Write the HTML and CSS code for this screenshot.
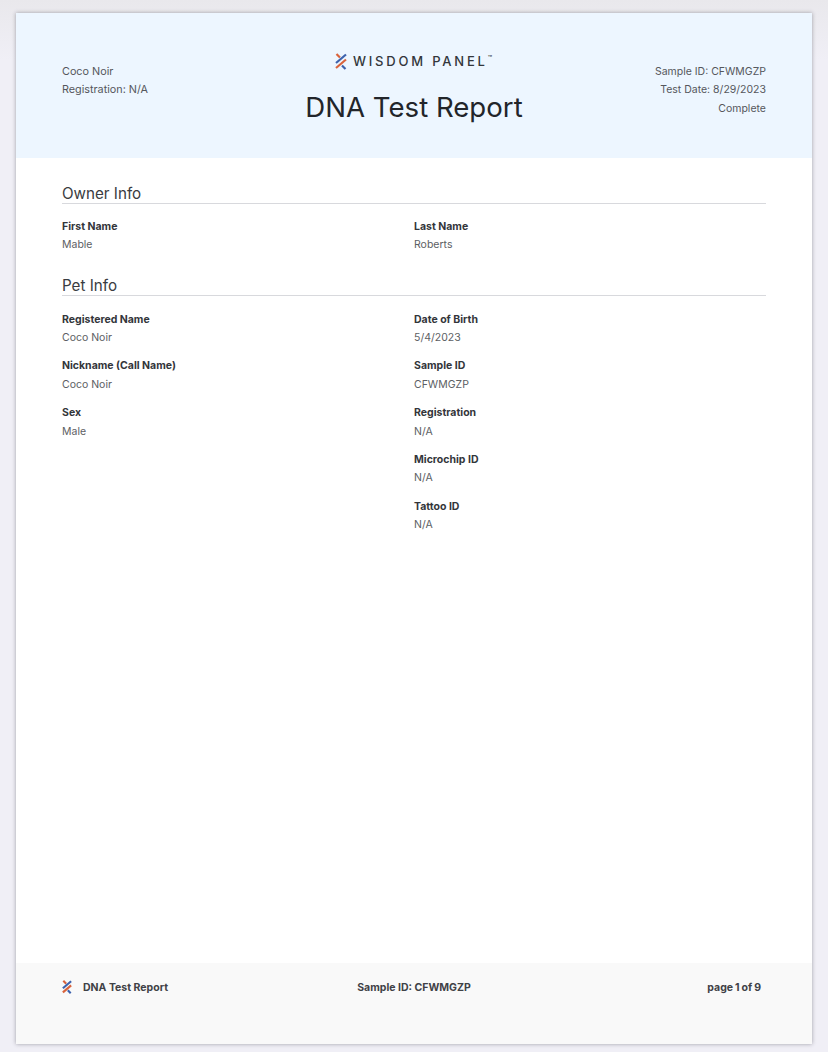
FILE: index.html
```html
<!DOCTYPE html>
<html lang="en">
<head>
<meta charset="utf-8">
<title>DNA Test Report</title>
<link rel="stylesheet" href="styles.css">
</head>
<body>
<main class="sheet">
  <header class="hero">
    <div class="hero-left">
      <div>Coco Noir</div>
      <div>Registration: N/A</div>
    </div>
    <div class="hero-center">
      <div class="brand">
        <svg class="mark" viewBox="0 0 12 17" width="12" height="17" aria-hidden="true">
          <path d="M1.5 1 L5 4.5" stroke="#d9633c" stroke-width="2.2" fill="none"/>
          <path d="M1 15 L11 6.5" stroke="#d9633c" stroke-width="2.2" fill="none"/>
          <path d="M1 10 L11 1.5" stroke="#3d62ad" stroke-width="2.2" fill="none"/>
          <path d="M7 12.5 L10.5 16" stroke="#3d62ad" stroke-width="2.2" fill="none"/>
        </svg>
        <span class="brand-name">WISDOM PANEL<sup class="tm">™</sup></span>
      </div>
      <h1 class="title">DNA Test Report</h1>
    </div>
    <div class="hero-right">
      <div>Sample ID: CFWMGZP</div>
      <div>Test Date: 8/29/2023</div>
      <div>Complete</div>
    </div>
  </header>

  <div class="content">
    <section class="section owner">
      <h2 class="section-title">Owner Info</h2>
      <div class="cols">
        <div class="col">
          <div class="field"><div class="label">First Name</div><div class="value">Mable</div></div>
        </div>
        <div class="col">
          <div class="field"><div class="label">Last Name</div><div class="value">Roberts</div></div>
        </div>
      </div>
    </section>

    <section class="section pet">
      <h2 class="section-title">Pet Info</h2>
      <div class="cols">
        <div class="col">
          <div class="field"><div class="label">Registered Name</div><div class="value">Coco Noir</div></div>
          <div class="field"><div class="label">Nickname (Call Name)</div><div class="value">Coco Noir</div></div>
          <div class="field"><div class="label">Sex</div><div class="value">Male</div></div>
        </div>
        <div class="col">
          <div class="field"><div class="label">Date of Birth</div><div class="value">5/4/2023</div></div>
          <div class="field"><div class="label">Sample ID</div><div class="value">CFWMGZP</div></div>
          <div class="field"><div class="label">Registration</div><div class="value">N/A</div></div>
          <div class="field"><div class="label">Microchip ID</div><div class="value">N/A</div></div>
          <div class="field"><div class="label">Tattoo ID</div><div class="value">N/A</div></div>
        </div>
      </div>
    </section>
  </div>

  <footer class="foot">
    <div class="foot-left">
      <svg class="foot-mark" viewBox="0 0 12 17" width="10" height="14" aria-hidden="true">
        <path d="M1.5 1 L5 4.5" stroke="#d9633c" stroke-width="2.6" fill="none"/>
        <path d="M1 15 L11 6.5" stroke="#d9633c" stroke-width="2.6" fill="none"/>
        <path d="M1 10 L11 1.5" stroke="#3d62ad" stroke-width="2.6" fill="none"/>
        <path d="M7 12.5 L10.5 16" stroke="#3d62ad" stroke-width="2.6" fill="none"/>
      </svg>
      <span>DNA Test Report</span>
    </div>
    <div class="foot-center">Sample ID: CFWMGZP</div>
    <div class="foot-right">page 1 of 9</div>
  </footer>
</main>
</body>
</html>
```

FILE: styles.css
```css
* { box-sizing: border-box; }
html, body { height: 100%; }
body {
  margin: 0;
  padding: 13px 16px 8px;
  height: 1052px;
  overflow: hidden;
  background: linear-gradient(#e9e8ec, #f0eff6 60px);
  font-family: Inter, "Liberation Sans", sans-serif;
  color: #55575c;
}
.sheet {
  height: 1031px;
  background: #fff;
  display: flex;
  flex-direction: column;
  box-shadow: 0 0 4px rgba(60, 60, 70, 0.45);
}
.hero {
  height: 145px;
  background: #edf6ff;
  padding: 50px 46px 0;
  display: grid;
  grid-template-columns: 1fr auto 1fr;
  align-items: start;
  font-size: 10.5px;
  line-height: 18.4px;
}
.hero-left { font-size: 10.8px; line-height: 18px; }
.hero-right { text-align: right; }
.hero-center { display: flex; flex-direction: column; align-items: center; margin-top: -13px; }
.brand { display: flex; align-items: center; gap: 6px; height: 22px; margin-left: -1px; }
.brand-name {
  font-size: 13px;
  font-weight: 500;
  letter-spacing: 2.8px;
  color: #33363b;
  white-space: nowrap;
}
.tm { font-size: 7px; letter-spacing: 0; vertical-align: 5px; line-height: 0; }
.title {
  margin: 18px 0 0;
  font-size: 27.6px;
  line-height: 34px;
  font-weight: 400;
  color: #22252a;
  white-space: nowrap;
}
.content { flex: 1; padding: 26px 46px 0; }
.section-title {
  margin: 0;
  font-size: 15.2px;
  line-height: 19px;
  font-weight: 400;
  color: #3a3c41;
  border-bottom: 1px solid #d8d9dd;
}
.cols { display: grid; grid-template-columns: 352px 1fr; padding-top: 13.7px; }
.owner { height: 92px; }
.pet .cols { padding-top: 14.7px; }
.col { display: flex; flex-direction: column; gap: 10.15px; }
.label { font-size: 10.5px; line-height: 18px; font-weight: 700; color: #33353a; }
.value { font-size: 10.5px; line-height: 18px; margin-top: 0.6px; color: #5c5e63; }
.foot {
  height: 81px;
  background: #f9f9f9;
  padding: 16px 51px 0 46px;
  display: grid;
  grid-template-columns: 1fr auto 1fr;
  align-items: start;
  font-size: 10.5px;
  line-height: 18px;
  font-weight: 700;
  color: #3f4146;
}
.foot-left { display: flex; align-items: center; gap: 11px; }
.foot-mark { margin-top: -2px; }
.foot-center { transform: translateX(2.5px); }
.foot-right { text-align: right; word-spacing: -0.5px; }
```
